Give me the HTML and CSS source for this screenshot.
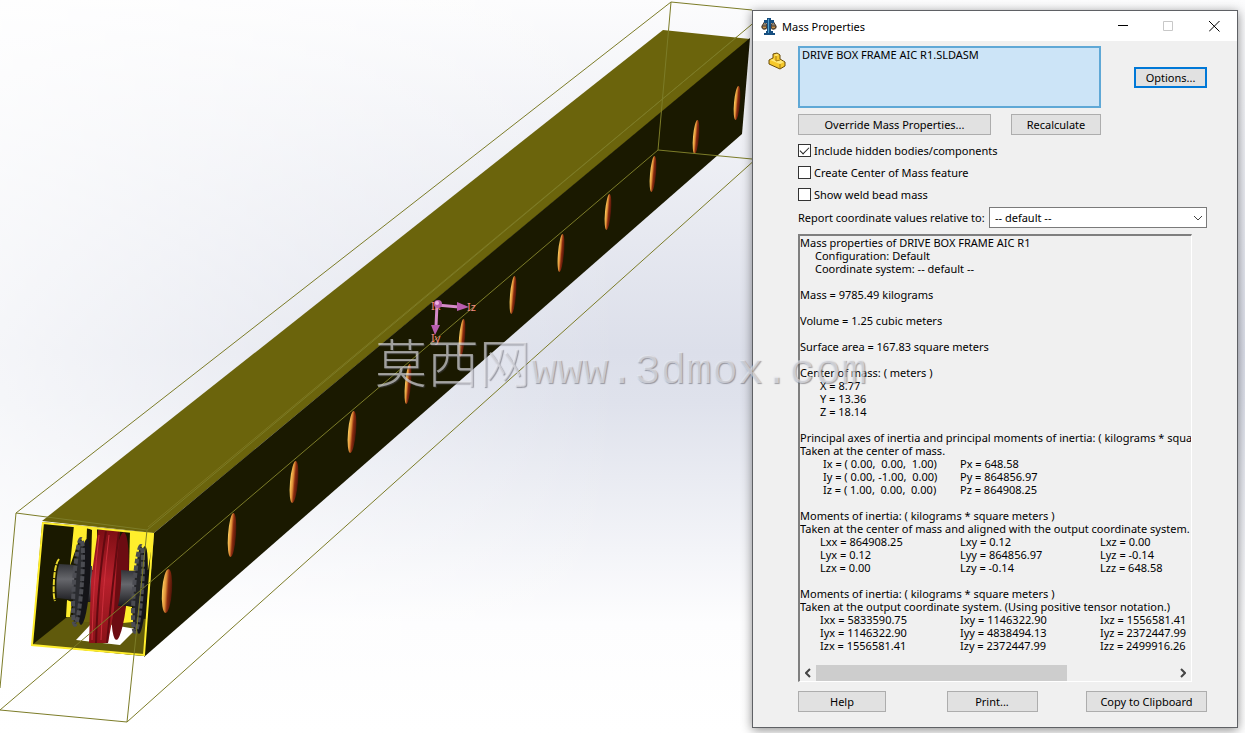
FILE: index.html
```
<!DOCTYPE html>
<html lang="en">

<head>
    <meta charset="UTF-8">
    <meta name="viewport" content="width=device-width, initial-scale=1.0">
    <title>Mass Properties</title>
    <link rel="stylesheet" href="styles.css">
</head>

<body>
    <main class="desktop">
        <!-- 3D model view -->
        <svg class="model" viewBox="0 0 1245 733" preserveAspectRatio="xMinYMin slice" aria-label="Drive box frame">
            <defs>
                <linearGradient id="hole" x1="0" x2="1" y1="0" y2="0">
                    <stop offset="0" stop-color="#ffd060" />
                    <stop offset="0.35" stop-color="#e09038" />
                    <stop offset="0.6" stop-color="#8c2c10" />
                    <stop offset="1" stop-color="#4a1408" />
                </linearGradient>
                <linearGradient id="shaft" x1="0" x2="0" y1="0" y2="1">
                    <stop offset="0" stop-color="#333438" />
                    <stop offset="0.4" stop-color="#66676c" />
                    <stop offset="1" stop-color="#1c1c20" />
                </linearGradient>
                <linearGradient id="wheel" x1="0" x2="0" y1="0" y2="1">
                    <stop offset="0" stop-color="#7d0e14" />
                    <stop offset="0.45" stop-color="#b8202c" />
                    <stop offset="1" stop-color="#8a1218" />
                </linearGradient>
                <clipPath id="opening">
                    <path d="M42 522L154 533L144 656L32 645Z" />
                </clipPath>
            </defs>

            <!-- beam -->
            <path fill="#6b640c" d="M42 521L663 30L750 39L154 533Z" />
            <path fill="#1a1900" d="M154 533L750 38L742 134L144 657Z" />
            <path fill="none" stroke="#7d7620" d="M148 527L737 37" />

            <!-- holes in the side plate -->
            <g fill="url(#hole)">
                <ellipse cx="737" cy="103" rx="3" ry="17" transform="rotate(5 737 103)" />
                <ellipse cx="696" cy="137" rx="3" ry="17" transform="rotate(5 696 137)" />
                <ellipse cx="653" cy="174" rx="3" ry="18" transform="rotate(5 653 174)" />
                <ellipse cx="608" cy="212" rx="3" ry="18" transform="rotate(5 608 212)" />
                <ellipse cx="561" cy="253" rx="3" ry="19" transform="rotate(5 561 253)" />
                <ellipse cx="513" cy="295" rx="3" ry="19" transform="rotate(5 513 295)" />
                <ellipse cx="462" cy="338" rx="3" ry="19" transform="rotate(5 462 338)" />
                <ellipse cx="408" cy="384" rx="3" ry="20" transform="rotate(5 408 384)" />
                <ellipse cx="352" cy="432" rx="4" ry="21" transform="rotate(5 352 432)" />
                <ellipse cx="294" cy="482" rx="4" ry="21" transform="rotate(5 294 482)" />
                <ellipse cx="232" cy="535" rx="4" ry="22" transform="rotate(4 232 535)" />
                <ellipse cx="167" cy="591" rx="5" ry="22" transform="rotate(4 167 591)" />
            </g>

            <!-- open end with axle, sprockets and wheel -->
            <g clip-path="url(#opening)">
                <path fill="#1a1900" d="M42 522H156V658H30Z" />
                <path fill="#605a0c" d="M32 645L67 617L95 614L146 619L144 657Z" />
                <path fill="#ffee2c" d="M74 525H97V570H90L86 552L79 540L70 566Z" />
                <path fill="#1a1900" d="M87 528L92 530L90 600L84 600Z" />
                <path fill="#ffee2c" d="M130 531L154 533L148 570L129 571Z" />
                <path fill="#ffee2c" d="M67 600L72 602L70 617L66 617ZM122 605L132 607L133 622L123 623Z" />
                <path fill="#ffffff" d="M76 640L91 624L95 622L136 629L120 645Z" />
                <path fill="#6b640c" d="M82 602L92 602L90 622L80 622Z" />
                <path fill="none" stroke="#e8d82c" stroke-width="2" stroke-dasharray="6 1" d="M59 559Q55 564 54 580Q53 596 55 601" />
                <path fill="url(#shaft)" d="M59 564L92 566V602L57 598Q55 580 59 564Z" />
                <ellipse cx="84" cy="582" rx="6" ry="43" transform="rotate(4 84 582)" fill="#141418" />
                <ellipse cx="78" cy="582" rx="4" ry="43" transform="rotate(4 78 582)" fill="#2b2c30" stroke="#4b4c52" stroke-width="4" stroke-dasharray="5 2" />
                <ellipse cx="120" cy="586" rx="8" ry="54" transform="rotate(4 120 586)" fill="#6c0c12" />
                <path fill="url(#wheel)" d="M98 530H120L117 560L114 610L108 643H89L91 580Z" />
                <path fill="none" stroke="#620a10" stroke-width="2" d="M106 531Q98 580 96 643M119 531Q113 580 107 643" />
                <path fill="none" stroke="#cc303c" d="M109 535Q103 585 101 640M99 535Q93 585 92 640" />
                <path fill="url(#shaft)" d="M121 570L146 572L144 606L118 606Q122 588 121 570Z" />
                <ellipse cx="142" cy="590" rx="5" ry="44" transform="rotate(4 142 590)" fill="#141418" />
                <ellipse cx="138" cy="589" rx="4" ry="43" transform="rotate(4 138 589)" fill="#242528" stroke="#4b4c52" stroke-width="4" stroke-dasharray="5 2" />
            </g>
            <path fill="none" stroke="#ffee2c" stroke-width="2" d="M43 523L153 534L144 655L32 645Z" />

            <!-- bounding box -->
            <g fill="none" stroke="#7c7c28">
                <path d="M0 688L16 513L147 530L127 722L0 710" />
                <path d="M752 10L671 2L658 150L752 159" />
                <path d="M16 513L671 2M147 530L757 20M0 710L658 150M127 722L757 158" />
            </g>

            <!-- principal axes -->
            <g class="axes">
                <path stroke="#d58ac8" stroke-width="3" d="M437 305L459 307M437 305L436 326" />
                <path fill="#b85cae" d="M457 302L469 307L457 311ZM431 325H440L435 335Z" />
                <text x="467" y="311">Iz</text>
                <text x="431" y="310">Ix</text>
                <text x="431" y="342">Iy</text>
                <circle cx="438" cy="304" r="4" fill="#b860aa" />
                <circle cx="437" cy="303" r="2" fill="#f0b0e4" />
            </g>
        </svg>

        <section class="dialog" aria-labelledby="dialog-title">
            <header class="titlebar">
                <svg class="app-icon" viewBox="0 0 16 17" aria-hidden="true">
                    <path fill="#8a8478" d="M4 3L0 9Q1 12 4 12Q6 12 7 9ZM12 3L9 9Q10 12 12 12Q15 12 16 9Z" />
                    <path fill="#c5914c" stroke="#4b3b2c" d="M1 8H6Q6 11 3 11Q1 11 1 8ZM10 8H15Q15 11 12 11Q10 11 10 8Z" />
                    <path fill="none" stroke="#4b3b2c" d="M4 3L1 8M4 3L6 8M12 3L10 8M12 3L15 8" />
                    <path fill="#174f80" d="M6 0H10V2L13 2V5H10V13H12V15H14V17H3V15H5V13H6V5H3V2H6Z" />
                    <path fill="#51a1d0" d="M7 1H8V15H7Z" />
                </svg>
                <h1 id="dialog-title">Mass Properties</h1>
                <div class="window-buttons">
                    <button type="button" aria-label="Minimize"><svg viewBox="0 0 22 22"><path d="M2 9H22" /></svg></button>
                    <button type="button" aria-label="Maximize" disabled><svg viewBox="0 0 22 22"><path d="M1 1H19V19H1Z" /></svg></button>
                    <button type="button" aria-label="Close"><svg viewBox="0 0 22 22"><path d="M0 0L21 21M21 0L0 21" /></svg></button>
                </div>
            </header>

            <form class="content">
                <svg class="part-icon" viewBox="0 0 18 18" aria-hidden="true">
                    <path fill="#f6c92c" stroke="#6b4c08" stroke-linejoin="round" d="M1 8L5 6V2L9 1L12 3V7L17 10V14L12 17L1 12Z" />
                    <path fill="#ffe878" d="M6 3L9 2L11 3L8 4ZM2 8L5 7L8 9L12 8L16 10L12 12Z" />
                    <path fill="none" stroke="#a67a12" d="M8 4V9L12 8M12 12V16" />
                </svg>

                <div class="selection-row">
                    <textarea class="selection" aria-label="Selected items" readonly>DRIVE BOX FRAME AIC R1.SLDASM</textarea>
                    <button type="button" class="btn btn-default">Options...</button>
                </div>

                <div class="action-row">
                    <button type="button" class="btn btn-override">Override Mass Properties...</button>
                    <button type="button" class="btn btn-recalc">Recalculate</button>
                </div>

                <div class="checks">
                    <label><input type="checkbox" checked>Include hidden bodies/components</label>
                    <label><input type="checkbox">Create Center of Mass feature</label>
                    <label><input type="checkbox">Show weld bead mass</label>
                </div>

                <div class="coord-row">
                    <label for="coord">Report coordinate values relative to:</label>
                    <div class="select-box">
                        <select id="coord">
                            <option>-- default --</option>
                        </select>
                        <svg viewBox="0 0 9 6" aria-hidden="true"><path d="M0 1L4 5L8 1" /></svg>
                    </div>
                </div>

                <div class="report">
                    <div class="report-text">
                        <p>Mass properties of DRIVE BOX FRAME AIC R1</p>
                        <p class="sub">Configuration: Default</p>
                        <p class="sub last">Coordinate system: -- default --</p>
                        <p class="last">Mass = 9785.49 kilograms</p>
                        <p class="last">Volume = 1.25 cubic meters</p>
                        <p class="last">Surface area = 167.83 square meters</p>
                        <p>Center of mass: ( meters )</p>
                        <p class="value">X = 8.77</p>
                        <p class="value">Y = 13.36</p>
                        <p class="value last">Z = 18.14</p>
                        <p>Principal axes of inertia and principal moments of inertia: ( kilograms * square meters )</p>
                        <p>Taken at the center of mass.</p>
                        <table class="axes-table">
                            <tr><td>Ix = ( 0.00,&nbsp; 0.00,&nbsp; 1.00)</td><td>Px = 648.58</td></tr>
                            <tr><td>Iy = ( 0.00, -1.00,&nbsp; 0.00)</td><td>Py = 864856.97</td></tr>
                            <tr><td>Iz = ( 1.00,&nbsp; 0.00,&nbsp; 0.00)</td><td>Pz = 864908.25</td></tr>
                        </table>
                        <p>Moments of inertia: ( kilograms * square meters )</p>
                        <p>Taken at the center of mass and aligned with the output coordinate system.</p>
                        <table>
                            <tr><td>Lxx = 864908.25</td><td>Lxy = 0.12</td><td>Lxz = 0.00</td></tr>
                            <tr><td>Lyx = 0.12</td><td>Lyy = 864856.97</td><td>Lyz = -0.14</td></tr>
                            <tr><td>Lzx = 0.00</td><td>Lzy = -0.14</td><td>Lzz = 648.58</td></tr>
                        </table>
                        <p>Moments of inertia: ( kilograms * square meters )</p>
                        <p>Taken at the output coordinate system. (Using positive tensor notation.)</p>
                        <table>
                            <tr><td>Ixx = 5833590.75</td><td>Ixy = 1146322.90</td><td>Ixz = 1556581.41</td></tr>
                            <tr><td>Iyx = 1146322.90</td><td>Iyy = 4838494.13</td><td>Iyz = 2372447.99</td></tr>
                            <tr><td>Izx = 1556581.41</td><td>Izy = 2372447.99</td><td>Izz = 2499916.26</td></tr>
                        </table>
                    </div>
                    <div class="scrollbar">
                        <button type="button" aria-label="Scroll left"><svg viewBox="0 0 6 10"><path d="M5 1L1 5L5 9" /></svg></button>
                        <div class="track"><div class="thumb"></div></div>
                        <button type="button" aria-label="Scroll right"><svg viewBox="0 0 6 10"><path d="M1 1L5 5L1 9" /></svg></button>
                    </div>
                </div>

                <footer class="footer">
                    <button type="button" class="btn btn-help">Help</button>
                    <button type="button" class="btn btn-print">Print...</button>
                    <button type="button" class="btn btn-copy">Copy to Clipboard</button>
                </footer>
            </form>
        </section>

        <p class="watermark"><span lang="zh">莫西网</span>www.3dmox.com</p>
    </main>
</body>

</html>
```
FILE: styles.css
```
* {
    box-sizing: border-box;
}

body {
    margin: 0;
    font-family: "Noto Sans", "Noto Sans CJK SC", sans-serif;
    font-size: 11px;
    line-height: 13px;
    color: #000;
}

h1,
p {
    margin: 0;
}

button,
select,
textarea,
input {
    font: inherit;
    color: inherit;
    margin: 0;
}

/* desktop */
.desktop {
    position: relative;
    min-height: 100vh;
    overflow: hidden;
    background: linear-gradient(90deg, rgba(255, 255, 255, 0.7), rgba(255, 255, 255, 0) 50%),
        linear-gradient(#fcfcfd, #dcdfea 48%, #dfe2ec 55%, #fdfdfe 85%, #fff);
}

.model {
    position: absolute;
    top: 0;
    left: 0;
    width: 100%;
    height: 100%;
}

.axes text {
    font-size: 11px;
    fill: #f08c80;
}

.watermark {
    position: absolute;
    top: 331px;
    left: 375px;
    display: flex;
    align-items: baseline;
    font-family: "Liberation Mono", monospace;
    font-size: 43px;
    line-height: 60px;
    color: rgba(236, 237, 242, 0.6);
    text-shadow: 1px 1px 1px rgba(80, 80, 90, 0.5);
    pointer-events: none;
}

.watermark span {
    font-family: "Noto Sans CJK SC", sans-serif;
    font-size: 52px;
    font-weight: 300;
}

/* dialog window */
.dialog {
    position: absolute;
    top: 10px;
    right: 7px;
    width: 486px;
    background: #f0f0f0;
    border: 1px solid #5f6165;
    box-shadow: 0 2px 10px rgba(0, 0, 0, 0.45);
}

.titlebar {
    display: flex;
    align-items: center;
    height: 30px;
    padding-left: 8px;
    background: #fff;
}

.titlebar h1 {
    margin-left: 5px;
    font-size: 11px;
    font-weight: 400;
}

.app-icon {
    width: 16px;
    height: 17px;
}

.window-buttons {
    display: flex;
    margin-left: auto;
}

.window-buttons button {
    width: 46px;
    height: 30px;
    padding: 0;
    border: 0;
    background: none;
}

.window-buttons svg {
    display: block;
    width: 11px;
    height: 11px;
    margin: 0 auto;
    fill: none;
    stroke: #000;
    stroke-width: 2;
}

.window-buttons button:disabled svg {
    stroke: #c8c8c8;
}

.content {
    position: relative;
    padding: 5px 30px 15px 45px;
}

.part-icon {
    position: absolute;
    top: 11px;
    left: 15px;
    width: 18px;
    height: 18px;
}

.btn {
    height: 21px;
    padding: 0;
    border: 1px solid #adadad;
    background: #e1e1e1;
    line-height: 19px;
}

.btn-default {
    width: 73px;
    border: 2px solid #0078d7;
    line-height: 17px;
}

.selection-row {
    display: flex;
    justify-content: space-between;
    align-items: center;
}

.selection {
    display: block;
    width: 303px;
    height: 62px;
    padding: 0 2px;
    border: 2px solid #5fa8d6;
    background: #cce4f7;
    resize: none;
    outline: none;
}

.action-row {
    display: flex;
    gap: 20px;
    margin-top: 6px;
}

.btn-override {
    width: 193px;
}

.btn-recalc {
    width: 90px;
}

/* check boxes */
.checks {
    margin-top: 4px;
}

.checks label {
    display: flex;
    align-items: center;
    height: 22px;
}

.checks input {
    appearance: none;
    position: relative;
    width: 13px;
    height: 13px;
    margin-right: 3px;
    border: 1px solid #333;
    background: #fff;
}

.checks input:checked::after {
    content: "";
    position: absolute;
    top: 0;
    left: 3px;
    width: 4px;
    height: 8px;
    border: solid #222;
    border-width: 0 1px 1px 0;
    transform: rotate(45deg);
}

.coord-row {
    display: flex;
    align-items: center;
    justify-content: space-between;
    margin-top: 2px;
}

.select-box {
    position: relative;
    width: 218px;
}

.select-box select {
    display: block;
    width: 100%;
    height: 21px;
    padding: 0 5px;
    appearance: none;
    border: 1px solid #7a7a7a;
    border-radius: 0;
    background: #fff;
}

.select-box svg {
    position: absolute;
    top: 8px;
    right: 4px;
    width: 9px;
    height: 6px;
    fill: none;
    stroke: #444;
    pointer-events: none;
}

/* report */
.report {
    width: 394px;
    margin-top: 6px;
    border: 1px solid #fff;
    border-top: 2px solid #7f7f7f;
    border-left: 2px solid #7f7f7f;
}

.report-text {
    height: 429px;
    overflow: hidden;
    white-space: nowrap;
}

.report-text .sub {
    padding-left: 15px;
}

.report-text .value {
    padding-left: 20px;
}

.report-text .last {
    margin-bottom: 13px;
}

.report-text table {
    table-layout: fixed;
    width: 420px;
    margin: 0 0 13px 20px;
    border-collapse: collapse;
}

.report-text td {
    width: 140px;
    padding: 0;
}

.report-text .axes-table {
    width: 280px;
}

.axes-table td:first-child {
    padding-left: 3px;
}

.scrollbar {
    display: flex;
    height: 16px;
}

.scrollbar button {
    width: 16px;
    padding: 0;
    border: 0;
    background: none;
}

.scrollbar svg {
    display: block;
    width: 6px;
    height: 10px;
    margin: 0 auto;
    fill: none;
    stroke: #444;
    stroke-width: 2;
}

.track {
    flex: 1;
}

.thumb {
    width: 70%;
    height: 100%;
    background: #cdcdcd;
}

.footer {
    display: flex;
    justify-content: space-between;
    margin-top: 9px;
}

.btn-help {
    width: 88px;
}

.btn-print {
    width: 91px;
    margin-left: 12px;
}

.btn-copy {
    width: 121px;
}
```
